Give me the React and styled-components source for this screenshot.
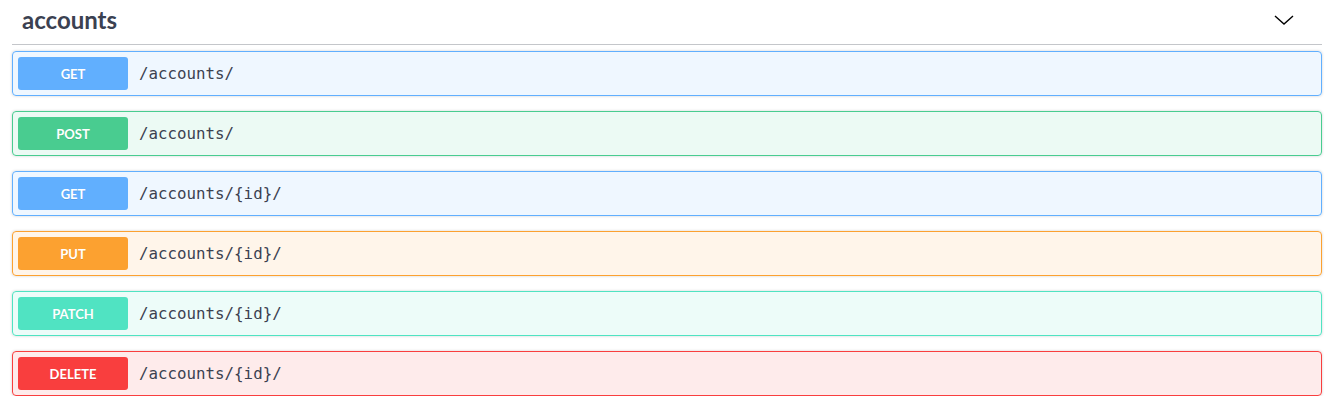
import React from 'react';
import styled, { createGlobalStyle } from 'styled-components';

const methods = {
  GET: '#61affe',
  POST: '#49cc90',
  PUT: '#fca130',
  PATCH: '#50e3c2',
  DELETE: '#f93e3e',
};

const tint = {
  GET: 'rgba(97, 175, 254, 0.1)',
  POST: 'rgba(73, 204, 144, 0.1)',
  PUT: 'rgba(252, 161, 48, 0.1)',
  PATCH: 'rgba(80, 227, 194, 0.1)',
  DELETE: 'rgba(249, 62, 62, 0.1)',
};

const endpoints = [
  { method: 'GET', path: '/accounts/' },
  { method: 'POST', path: '/accounts/' },
  { method: 'GET', path: '/accounts/{id}/' },
  { method: 'PUT', path: '/accounts/{id}/' },
  { method: 'PATCH', path: '/accounts/{id}/' },
  { method: 'DELETE', path: '/accounts/{id}/' },
];

const GlobalStyle = createGlobalStyle`
  body {
    margin: 0;
    background: #fff;
    font-family: Lato, "Liberation Sans", sans-serif;
  }
`;

const App = () => {
  return (
    <>
      <GlobalStyle />
      <Section>
        <TagHeader>
          <TagTitle>accounts</TagTitle>
          <Chevron width="20" height="20" viewBox="0 0 20 20">
            <polyline points="1,6 10,14 19,6" />
          </Chevron>
        </TagHeader>
        <OpList>
          {endpoints.map((ep, i) => (
            <OpBlock key={i} $method={ep.method}>
              <Badge $method={ep.method}>{ep.method}</Badge>
              <Path>{ep.path}</Path>
            </OpBlock>
          ))}
        </OpList>
      </Section>
    </>
  );
};

export default App;

const Section = styled.section`
  padding: 0 14px 0 12px;
`;

const TagHeader = styled.div`
  display: flex;
  align-items: center;
  justify-content: space-between;
  height: 45px;
  padding: 0 28px 6px 10px;
  box-sizing: border-box;
  border-bottom: 1px solid rgba(59, 65, 81, 0.3);
`;

const TagTitle = styled.h3`
  margin: 0;
  font-family: Lato, "Liberation Sans", sans-serif;
  font-size: 24px;
  font-weight: 700;
  color: #3b4151;
`;

const Chevron = styled.svg`
  fill: none;
  stroke: #000;
  stroke-width: 1.4;
  margin-top: 2px;
`;

const OpList = styled.div`
  display: flex;
  flex-direction: column;
  gap: 15px;
  padding-top: 6px;
`;

const OpBlock = styled.div`
  display: flex;
  align-items: center;
  gap: 11px;
  padding: 5px;
  border: 1px solid ${(p) => methods[p.$method]};
  border-radius: 4px;
  background: ${(p) => tint[p.$method]};
  box-shadow: 0 0 3px rgba(0, 0, 0, 0.19);
`;

const Badge = styled.span`
  display: flex;
  align-items: center;
  justify-content: center;
  width: 110px;
  height: 33px;
  border-radius: 3px;
  background: ${(p) => methods[p.$method]};
  color: #fff;
  font-family: Lato, "Liberation Sans", sans-serif;
  font-size: 13px;
  font-weight: 700;
  text-shadow: 0 1px 0 rgba(0, 0, 0, 0.1);
`;

const Path = styled.span`
  font-family: "DejaVu Sans Mono", "Liberation Mono", monospace;
  font-size: 15.8px;
  color: #3b4151;
`;
